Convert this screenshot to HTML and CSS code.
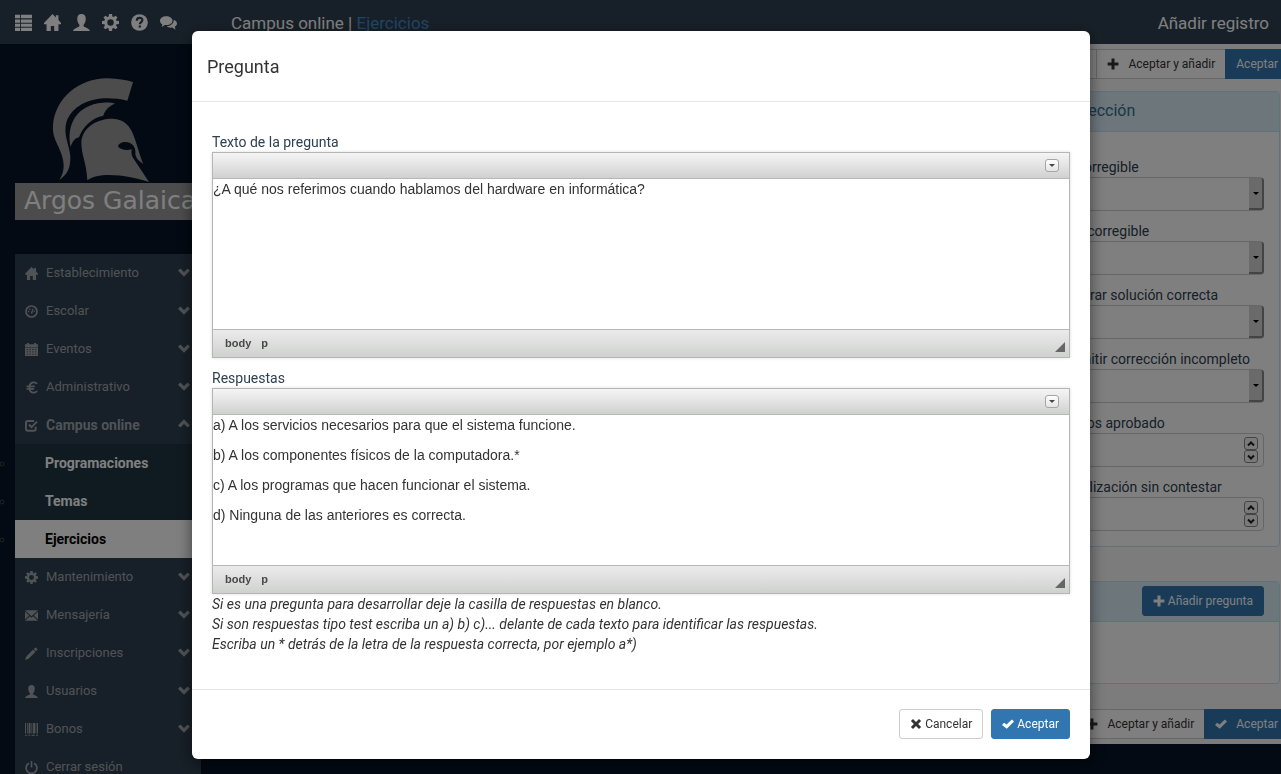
FILE: index.html
```html
<!DOCTYPE html>
<html lang="es">
<head>
    <meta charset="UTF-8">
    <meta name="viewport" content="width=device-width, initial-scale=1.0">
    <title>Campus online | Ejercicios</title>
    <link rel="stylesheet" href="styles.css">
</head>
<body>
    <!-- Iconos -->
    <svg class="sprite" aria-hidden="true">
        <symbol id="i-list" viewBox="0 0 20 20"><path d="M0 1h6v4H0zM7 1h13v4H7zM0 6.500h6v3.700H0zM7 6.500h13v3.700H7zM0 11.500h6v3.500H0zM7 11.500h13v3.500H7zM0 16.200h6V20H0zM7 16.200h13V20H7z"/></symbol>
        <symbol id="i-home" viewBox="0 0 20 20"><path d="M10 0l4 4V1.500h3V7l3 3.500V12h-3v8h-5v-6H8v6H3v-8H0v-1.500z"/></symbol>
        <symbol id="i-user" viewBox="0 0 20 20"><path d="M10 0C6.500 0 5 2.200 5 5.500c0 3 1 5.500 2.500 7v1.800c-1 1.400-6.500 2.200-7.500 5.700h20c-1-3.500-6.500-4.300-7.500-5.700v-1.800c1.500-1.500 2.500-4 2.500-7C15 2.200 13.500 0 10 0z"/></symbol>
        <symbol id="i-cog" viewBox="0 0 20 20"><path fill-rule="evenodd" d="M8.200 0h3.600l.4 3 1.400.6L16.100 2 18.200 4.100l-1.700 2.300.6 1.400 2.900.4v3.600l-2.900.4-.6 1.400 1.700 2.300-2.100 2.100-2.500-1.600-1.400.6-.4 3H8.200l-.4-3-1.400-.6L3.900 18 1.800 15.900l1.700-2.300-.6-1.400L0 11.800V8.200l2.900-.4.6-1.400L1.800 4.100 3.900 2l2.500 1.600L7.800 3zM10 6.200a3.800 3.800 0 100 7.600 3.800 3.800 0 000-7.600z"/></symbol>
        <symbol id="i-help" viewBox="0 0 20 20"><circle cx="10" cy="10" r="9.800"/><path d="M6.800 7.800c0-4.400 6.600-4.200 6.600-.7 0 2.500-3 2.300-3 5.100" fill="none" stroke="#2f4050" stroke-width="2.500"/><path d="M9 13.500h2.700V16H9z" fill="#2f4050"/></symbol>
        <symbol id="i-chat" viewBox="0 0 20 20"><path d="M7.300 2.500C3.200 2.500 0 4.800 0 7.800c0 1.800 1 3.300 2.700 4.200L2 15.300l3.700-2.400c5 .7 9-1.900 9-5.100 0-3-3.300-5.300-7.400-5.300z"/><path d="M16.200 6.700c.3 4-3.600 7.500-8.200 7.700 1.500 1.400 4 2 6.400 1.600l3.900 2.400-.9-3.400c1.600-.8 2.600-2.100 2.600-3.700 0-2-1.500-3.800-3.800-4.600z"/></symbol>
        <symbol id="i-dash" viewBox="0 0 20 20"><circle cx="10" cy="10" r="8.500" fill="none" stroke="currentColor" stroke-width="2.600"/><path d="M9 12l3-7 1 .5-1.500 7.500H9zM4.500 9h2v2h-2zM6.500 5.500h2v2h-2zM13.500 8.500h2v2h-2z"/></symbol>
        <symbol id="i-calendar" viewBox="0 0 20 20"><path fill-rule="evenodd" d="M0 2h3V0h3v2h8V0h3v2h3v4H0zM0 7h20v13H0zM2.500 9.500v1.200h2.500V9.500zm4.200 0v1.200h2.500V9.500zm4.200 0v1.200h2.500V9.500zm4.200 0v1.200h2.500V9.500zM2.500 13v1.200h2.500V13zm4.200 0v1.200h2.500V13zm4.200 0v1.200h2.500V13zm4.200 0v1.200h2.500V13zM2.500 16.500v1.200h2.500v-1.200zm4.200 0v1.200h2.500v-1.200zm4.200 0v1.200h2.500v-1.200zm4.200 0v1.200h2.500v-1.200z"/></symbol>
        <symbol id="i-euro" viewBox="0 0 20 20"><path d="M18.500 4.300C16.500 1.500 8 .2 7 8v4c1 7.500 9.500 7 11.500 3.300M2.500 8.200H15M2.500 12H14" fill="none" stroke="currentColor" stroke-width="2.600"/></symbol>
        <symbol id="i-check" viewBox="0 0 20 20"><path d="M14 3H4.500C2.500 3 1.500 4 1.500 6v9c0 2 1 3 3 3h9c2 0 3-1 3-3v-3M6 8.500l4 4L18.500 4" fill="none" stroke="currentColor" stroke-width="3"/></symbol>
        <symbol id="i-mail" viewBox="0 0 20 20"><path d="M0 2h20l-10 9zM0 4l6.300 6L0 16zM20 4v12l-6.300-6zM7.500 11l2.500 2.300 2.500-2.300L20 18H0z"/></symbol>
        <symbol id="i-pencil" viewBox="0 0 20 20"><path d="M15.500 1c1-1 4.500 2.500 3.500 3.500l-2 2L13.500 3zM12.500 4L16 7.500 5.500 18 0 20l2-5.500z"/></symbol>
        <symbol id="i-barcode" viewBox="0 0 20 20"><path d="M0 0h1.500v16H0zM3 0h1.200v16H3zM5.500 0h3v16h-3zM10 0h1.200v16H10zM12.500 0h3v16h-3zM16.500 0h1v16h-1zM18.500 0H20v16h-1.500zM0 18h3v1.500H0zM5 18h3v1.500H5zM10 18h5v1.500h-5zM17 18h3v1.500h-3z"/></symbol>
        <symbol id="i-off" viewBox="0 0 20 20"><path d="M6 3.500a8.300 8.300 0 108 0M10 0v10" fill="none" stroke="currentColor" stroke-width="2.600"/></symbol>
        <symbol id="i-down" viewBox="0 0 20 20"><path d="M2 6l8 8 8-8" fill="none" stroke="currentColor" stroke-width="5.500"/></symbol>
        <symbol id="i-up" viewBox="0 0 20 20"><path d="M2 14l8-8 8 8" fill="none" stroke="currentColor" stroke-width="5.500"/></symbol>
        <symbol id="i-plus" viewBox="0 0 20 20"><path d="M7.500 1h5v6.500H19v5h-6.500V19h-5v-6.500H1v-5h6.500z"/></symbol>
        <symbol id="i-ok" viewBox="0 0 20 20"><path d="M0 11.500l3.500-3.500 4 3L16.500 2.500 20 6 8 18z"/></symbol>
        <symbol id="i-remove" viewBox="0 0 20 20"><path d="M5 1.500l5 5 5-5L18.500 5l-5 5 5 5-3.500 3.500-5-5-5 5L1.500 15l5-5-5-5z"/></symbol>
    </svg>

    <header class="topbar">
        <nav class="topbar-icons">
            <a href="#" aria-label="Menú"><svg class="icon-lg"><use href="#i-list"/></svg></a>
            <a href="#" aria-label="Inicio"><svg class="icon-lg"><use href="#i-home"/></svg></a>
            <a href="#" aria-label="Perfil"><svg class="icon-lg"><use href="#i-user"/></svg></a>
            <a href="#" aria-label="Ajustes"><svg class="icon-lg"><use href="#i-cog"/></svg></a>
            <a href="#" aria-label="Ayuda"><svg class="icon-lg"><use href="#i-help"/></svg></a>
            <a href="#" aria-label="Mensajes"><svg class="icon-lg"><use href="#i-chat"/></svg></a>
        </nav>
        <div class="topbar-title">Campus online | <a href="#">Ejercicios</a></div>
        <div class="topbar-action">Añadir registro</div>
    </header>

    <div class="page">
        <aside class="sidebar">
            <div class="logo">
                <svg class="helmet" viewBox="158 52 294 318" aria-hidden="true">
                    <path d="M401 67L384 123C300 103 225 125 202 185C190 225 210 255 213 290C214 325 204 345 180 361C197 335 195 310 187 285C176 250 158 235 161 195C168 115 240 55 325 56C355 57 380 61 401 67z"/>
                    <path d="M347 132C325 140 316 155 312 168C280 172 250 202 239 233C227 235 218 247 214 262C200 195 232 135 310 129C325 128 335 128 347 132z"/>
                    <path fill-rule="evenodd" d="M264 362C262 310 245 285 246 245C252 200 295 177 340 177C375 178 393 200 403 228C416 262 420 285 432 313C418 303 412 300 408 284C411 265 400 246 375 247C362 249 357 255 356 260C363 272 385 273 397 269C396 279 396 287 400 293L449 367C400 350 300 332 264 362z"/>
                </svg>
                <div class="brand">Argos Galaica</div>
            </div>
            <ul class="menu">
                <li><a href="#"><svg class="icon"><use href="#i-home"/></svg>Establecimiento<svg class="arrow"><use href="#i-down"/></svg></a></li>
                <li><a href="#"><svg class="icon"><use href="#i-dash"/></svg>Escolar<svg class="arrow"><use href="#i-down"/></svg></a></li>
                <li><a href="#"><svg class="icon"><use href="#i-calendar"/></svg>Eventos<svg class="arrow"><use href="#i-down"/></svg></a></li>
                <li><a href="#"><svg class="icon"><use href="#i-euro"/></svg>Administrativo<svg class="arrow"><use href="#i-down"/></svg></a></li>
                <li>
                    <a href="#" class="open"><svg class="icon"><use href="#i-check"/></svg>Campus online<svg class="arrow"><use href="#i-up"/></svg></a>
                    <ul class="submenu">
                        <li><a href="#">Programaciones</a></li>
                        <li><a href="#">Temas</a></li>
                        <li><a href="#" class="active">Ejercicios</a></li>
                    </ul>
                </li>
                <li><a href="#"><svg class="icon"><use href="#i-cog"/></svg>Mantenimiento<svg class="arrow"><use href="#i-down"/></svg></a></li>
                <li><a href="#"><svg class="icon"><use href="#i-mail"/></svg>Mensajería<svg class="arrow"><use href="#i-down"/></svg></a></li>
                <li><a href="#"><svg class="icon"><use href="#i-pencil"/></svg>Inscripciones<svg class="arrow"><use href="#i-down"/></svg></a></li>
                <li><a href="#"><svg class="icon"><use href="#i-user"/></svg>Usuarios<svg class="arrow"><use href="#i-down"/></svg></a></li>
                <li><a href="#"><svg class="icon"><use href="#i-barcode"/></svg>Bonos<svg class="arrow"><use href="#i-down"/></svg></a></li>
                <li><a href="#"><svg class="icon"><use href="#i-off"/></svg>Cerrar sesión</a></li>
            </ul>
        </aside>

        <main class="content">
            <div class="btn-group">
                <button type="button" class="btn btn-default">Cancelar</button>
                <button type="button" class="btn btn-default btn-add"><svg class="icon-btn"><use href="#i-plus"/></svg>Aceptar y añadir</button>
                <button type="button" class="btn btn-primary">Aceptar</button>
            </div>

            <section class="panel panel-correction">
                <h2 class="panel-heading">Corrección</h2>
                <div class="panel-body">
                    <div class="form-group">
                        <label for="corregible">Es corregible</label>
                        <div class="select-wrap"><select id="corregible"><option></option></select></div>
                    </div>
                    <div class="form-group">
                        <label for="auto">Autocorregible</label>
                        <div class="select-wrap"><select id="auto"><option></option></select></div>
                    </div>
                    <div class="form-group">
                        <label for="solucion">Mostrar solución correcta</label>
                        <div class="select-wrap"><select id="solucion"><option></option></select></div>
                    </div>
                    <div class="form-group">
                        <label for="incompleto">Permitir corrección incompleto</label>
                        <div class="select-wrap"><select id="incompleto"><option></option></select></div>
                    </div>
                    <div class="form-group">
                        <label for="aprobado">Puntos aprobado</label>
                        <div class="spinner">
                            <input type="text" id="aprobado">
                            <div class="spinner-buttons">
                                <button type="button" aria-label="Más"><svg viewBox="0 0 8 8"><path d="M1 5.500l3-3 3 3"/></svg></button>
                                <button type="button" aria-label="Menos"><svg viewBox="0 0 8 8"><path d="M1 2.500l3 3 3-3"/></svg></button>
                            </div>
                        </div>
                    </div>
                    <div class="form-group">
                        <label for="penalizacion">Penalización sin contestar</label>
                        <div class="spinner">
                            <input type="text" id="penalizacion">
                            <div class="spinner-buttons">
                                <button type="button" aria-label="Más"><svg viewBox="0 0 8 8"><path d="M1 5.500l3-3 3 3"/></svg></button>
                                <button type="button" aria-label="Menos"><svg viewBox="0 0 8 8"><path d="M1 2.500l3 3 3-3"/></svg></button>
                            </div>
                        </div>
                    </div>
                </div>
            </section>

            <section class="panel panel-questions">
                <div class="panel-heading">
                    <button type="button" class="btn btn-primary btn-round"><svg class="icon-btn"><use href="#i-plus"/></svg>Añadir pregunta</button>
                </div>
                <div class="panel-body"></div>
            </section>

            <div class="btn-group">
                <button type="button" class="btn btn-default btn-add"><svg class="icon-btn"><use href="#i-plus"/></svg>Aceptar y añadir</button>
                <button type="button" class="btn btn-primary btn-add"><svg class="icon-btn"><use href="#i-ok"/></svg>Aceptar</button>
            </div>
        </main>
    </div>

    <div class="backdrop">
        <div class="modal" role="dialog" aria-labelledby="modalTitle">
            <div class="modal-header">
                <h4 id="modalTitle">Pregunta</h4>
            </div>
            <div class="modal-body">
                <label id="lblPregunta">Texto de la pregunta</label>
                <div class="editor">
                    <div class="editor-top"><button type="button" class="collapser" aria-label="Barra de herramientas"></button></div>
                    <div class="editor-text" contenteditable="true" spellcheck="false" role="textbox" aria-labelledby="lblPregunta">
                        <p>¿A qué nos referimos cuando hablamos del hardware en informática?</p>
                    </div>
                    <div class="editor-bottom"><span>body</span><span>p</span><i class="resizer"></i></div>
                </div>

                <label id="lblRespuestas">Respuestas</label>
                <div class="editor">
                    <div class="editor-top"><button type="button" class="collapser" aria-label="Barra de herramientas"></button></div>
                    <div class="editor-text" contenteditable="true" spellcheck="false" role="textbox" aria-labelledby="lblRespuestas">
                        <p>a) A los servicios necesarios para que el sistema funcione.</p>
                        <p>b) A los componentes físicos de la computadora.*</p>
                        <p>c) A los programas que hacen funcionar el sistema.</p>
                        <p>d) Ninguna de las anteriores es correcta.</p>
                    </div>
                    <div class="editor-bottom"><span>body</span><span>p</span><i class="resizer"></i></div>
                </div>

                <p class="help">
                    Si es una pregunta para desarrollar deje la casilla de respuestas en blanco.<br>
                    Si son respuestas tipo test escriba un a) b) c)... delante de cada texto para identificar las respuestas.<br>
                    Escriba un * detrás de la letra de la respuesta correcta, por ejemplo a*)
                </p>
            </div>
            <div class="modal-footer">
                <button type="button" class="btn btn-default btn-round"><svg class="icon-btn"><use href="#i-remove"/></svg>Cancelar</button>
                <button type="button" class="btn btn-primary btn-round"><svg class="icon-btn"><use href="#i-ok"/></svg>Aceptar</button>
            </div>
        </div>
    </div>
</body>
</html>
```
FILE: styles.css
```css
*,
*::before,
*::after {
    box-sizing: border-box;
}
body {
    margin: 0;
    height: 100vh;
    overflow: hidden;
    background-color: #061426;
    color: #333;
    font-family: Roboto, sans-serif;
    font-size: 14px;
    line-height: 20px;
}
a {
    color: inherit;
    text-decoration: none;
}
svg {
    fill: currentColor;
    flex: none;
}
.sprite {
    display: none;
}

/* Cabecera */
.topbar {
    display: flex;
    align-items: center;
    height: 44px;
    padding: 2px 12px 0 15px;
    background-color: #2f4050;
    color: #fff;
    font-size: 17px;
}
.topbar-icons {
    display: flex;
    gap: 12px;
    width: 216px;
    padding-bottom: 2px;
}
.topbar-icons a {
    display: flex;
}
.icon-lg {
    width: 17px;
    height: 17px;
}
.topbar-title a {
    color: #428bca;
}
.topbar-action {
    margin-left: auto;
}

/* Menú lateral */
.page {
    display: flex;
    align-items: flex-start;
}
.sidebar {
    width: 201px;
    padding: 33px 0 0 15px;
    flex: none;
}
.logo {
    margin-bottom: 34px;
}
.helmet {
    display: block;
    width: 98px;
    height: 106px;
    margin-left: 37px;
    color: #999;
}
.brand {
    height: 37px;
    padding-left: 9px;
    background-color: #999;
    color: #fff;
    font: 25px/35px "DejaVu Sans", sans-serif;
    white-space: nowrap;
}
.menu,
.submenu {
    margin: 0;
    padding: 0;
    list-style: none;
}
.menu a {
    display: flex;
    align-items: center;
    height: 38px;
    padding: 0 11px 0 10px;
    background-color: #2f4050;
    color: #a0a6ac;
    font-size: 13px;
}
.menu .icon {
    width: 13px;
    height: 13px;
    margin-right: 8px;
}
.menu .arrow {
    width: 12px;
    height: 12px;
    margin: 0 0 3px auto;
}
.menu .open {
    font-size: 14px;
    font-weight: bold;
}
.submenu {
    list-style: circle;
    color: #444;
}
.menu .submenu a {
    padding-left: 30px;
    background-color: #203642;
    color: #fff;
    font-size: 14px;
    font-weight: bold;
}
.menu .submenu .active {
    background-color: #fff;
    color: #000;
}

/* Contenido */
.content {
    flex: 1;
    min-width: 0;
    padding: 5px 1px 5px 15px;
    background-color: #f8f8f8;
    overflow: hidden;
}
.btn {
    display: inline-flex;
    align-items: center;
    justify-content: center;
    gap: 3px;
    height: 30px;
    padding: 0 10px;
    border: 1px solid #ccc;
    background-color: #fff;
    color: #333;
    font: 12px/18px Roboto, sans-serif;
    cursor: pointer;
}
.btn-primary {
    border-color: #3276b1;
    background-color: #3276b1;
    color: #fff;
}
.btn-round {
    border-radius: 3px;
}
.btn-add {
    gap: 9px;
}
.icon-btn {
    width: 12px;
    height: 12px;
}
.btn-group {
    display: flex;
    justify-content: flex-end;
    margin-right: -10px;
}
.btn-group .btn + .btn {
    margin-left: -1px;
}
.btn-group .btn-primary {
    padding-right: 11px;
}
.panel {
    border: 1px solid #bce8f1;
    border-radius: 4px;
    background-color: #fff;
}
.panel-heading {
    margin: 0;
    border-bottom: 1px solid #bce8f1;
    background-color: #d9edf7;
    color: #31708f;
}
.panel-correction {
    width: 238px;
    margin: 12px 0 34px auto;
}
.panel-correction .panel-heading {
    padding: 9px 15px 10px;
    font-size: 16px;
    font-weight: normal;
}
.panel-correction .panel-body {
    padding: 25px 15px 5px;
}
.form-group {
    margin-bottom: 10px;
}
label {
    display: block;
    color: #2f4050;
    white-space: nowrap;
}
select,
input[type="text"] {
    display: block;
    width: 100%;
    height: 34px;
    border: 1px solid #ccc;
    border-radius: 4px;
    background-color: #fff;
    appearance: none;
}
.select-wrap,
.spinner {
    position: relative;
}
.select-wrap::before {
    content: "";
    position: absolute;
    top: 1px;
    right: 0;
    width: 15px;
    height: 32px;
    border: solid #888;
    border-width: 0 2px 2px 0;
    border-radius: 0 3px 3px 0;
    background-color: #d5d5d5;
    pointer-events: none;
}
.select-wrap::after {
    content: "";
    position: absolute;
    top: 15px;
    right: 5px;
    border: 3px solid transparent;
    border-top-color: #000;
    border-bottom: 0;
    pointer-events: none;
}
.spinner-buttons {
    position: absolute;
    top: 4px;
    right: 6px;
    display: flex;
    flex-direction: column;
}
.spinner-buttons button {
    display: flex;
    align-items: center;
    justify-content: center;
    width: 14px;
    height: 13px;
    padding: 0;
    border: 1px solid #888;
    border-radius: 3px;
    background-color: #f4f4f4;
    color: #222;
}
.spinner-buttons svg {
    width: 8px;
    height: 8px;
    fill: none;
    stroke: #222;
    stroke-width: 2px;
}
.panel-questions {
    margin-bottom: 25px;
}
.panel-questions .panel-heading {
    display: flex;
    justify-content: flex-end;
    padding: 4px 15px 5px;
}
.panel-questions .panel-body {
    height: 61px;
}

/* Ventana modal */
.backdrop {
    position: fixed;
    inset: 0;
    padding: 31px 15px 31px 16px;
    background-color: rgba(0,0,0,0.5);
}
.modal {
    max-width: 898px;
    margin: 0 auto;
    border-radius: 6px;
    background-color: #fff;
    box-shadow: 0 5px 15px rgba(0,0,0,0.5);
}
.modal-header {
    padding: 26px 15px 24px;
    border-bottom: 1px solid #e5e5e5;
}
.modal-header h4 {
    margin: 0;
    font-size: 18px;
    font-weight: normal;
}
.modal-body {
    padding: 30px 20px 35px;
}
.editor {
    border: 1px solid #b6b6b6;
    box-shadow: 0 0 3px rgba(0,0,0,0.15);
}
.editor + label {
    margin-top: 10px;
}
.editor-top {
    display: flex;
    align-items: center;
    justify-content: flex-end;
    height: 26px;
    padding-right: 10px;
    border-bottom: 1px solid #b6b6b6;
    background: linear-gradient(#f5f5f5, #cfd1cf);
}
.collapser {
    display: flex;
    align-items: center;
    justify-content: center;
    width: 14px;
    height: 13px;
    padding: 0;
    border: 1px solid #a6a6a6;
    border-radius: 3px;
    background: linear-gradient(#fff, #e4e4e4);
}
.collapser::before {
    content: "";
    border: 3px solid transparent;
    border-top-color: #474747;
    border-bottom: 0;
}
.editor-text {
    height: 150px;
    overflow: auto;
    outline: none;
    font-family: "Liberation Sans", Arial, sans-serif;
}
.editor-text p {
    margin: 0 0 10px;
}
.editor-bottom {
    display: flex;
    align-items: center;
    gap: 10px;
    height: 28px;
    padding: 0 4px 2px 12px;
    border-top: 1px solid #b6b6b6;
    background: linear-gradient(#ebebeb, #cfd1cf);
    color: #484848;
    font: bold 11px/20px "Liberation Sans", Arial, sans-serif;
}
.resizer {
    align-self: flex-end;
    margin: 0 0 3px auto;
    border: 5px solid #666;
    border-top-color: transparent;
    border-left-color: transparent;
}
.help {
    margin: 0;
    font-style: italic;
}
.modal-footer {
    display: flex;
    justify-content: flex-end;
    gap: 8px;
    padding: 19px 20px 20px;
    border-top: 1px solid #e5e5e5;
}
```
